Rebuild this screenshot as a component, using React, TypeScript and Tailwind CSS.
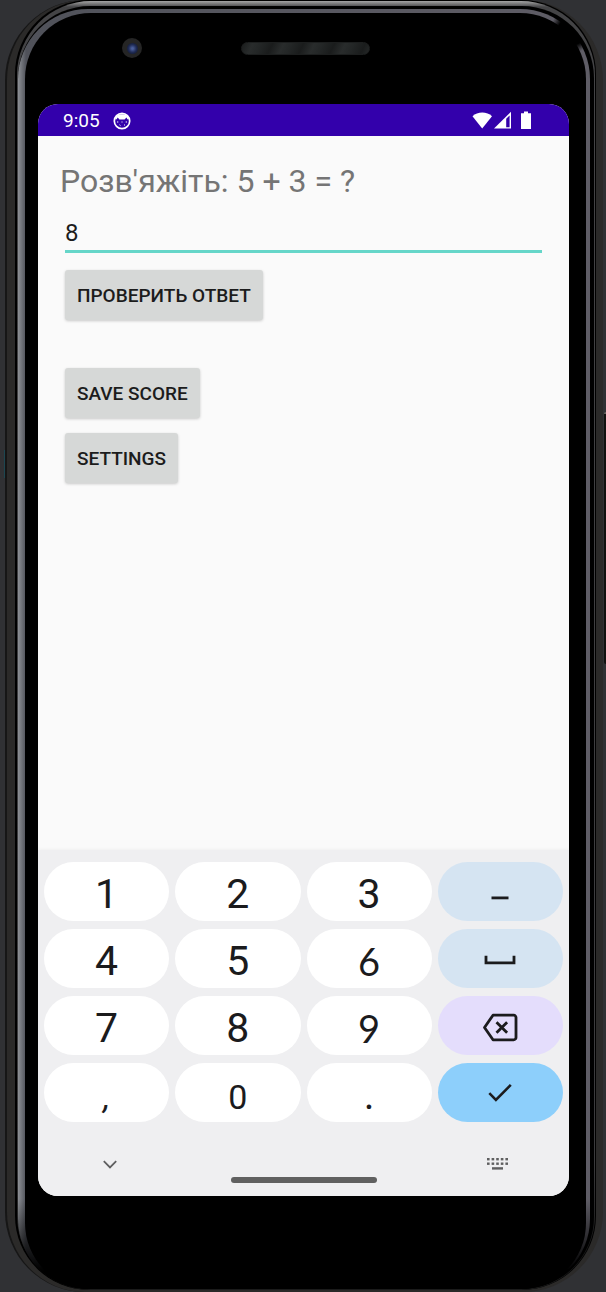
import { useState } from 'react';
import type { ReactNode } from 'react';

function CatFaceIcon() {
  return (
    <svg viewBox="0 0 18 18" className="size-[18px]" aria-hidden="true">
      <circle cx="9" cy="9" r="7.7" fill="none" stroke="#fff" strokeWidth="1.7" />
      <path d="M2 6 C4 1 14 1 16 6 L14.6 7.4 L13.4 5.6 L11.6 7.6 L6.4 7.6 L4.8 5.6 L3.4 7.4 Z" fill="#fff" />
      <path d="M4 10h1.3M12.7 10H14M6.5 12.8l1 .8M11 13.4l1-.8M8.5 10h1" stroke="#fff" strokeWidth="1" />
    </svg>
  );
}

function StatusIcons() {
  return (
    <svg viewBox="0 0 60 20" className="h-5 w-[60px]" role="img" aria-label="Wi-Fi, mobile signal, battery">
      <path d="M0.5 5.2 C5.5 0.4 15 0.4 20 5.2 L10.2 17.5 Z" fill="#fff" />
      <path d="M22 17.5 L39 0.8 V17.5 Z" fill="#fff" />
      <path d="M34.2 7.8 L37.6 4.4 V16.2 H34.2 Z" fill="#3300ab" />
      <path d="M52 0.5h4v1.8h3v15.8H49V2.3h3z" fill="#fff" />
    </svg>
  );
}

function MinusIcon() {
  return (
    <svg viewBox="0 0 18 4" className="mt-3 h-1 w-[18px]" aria-hidden="true">
      <rect x="0.5" y="0.5" width="17" height="2.8" fill="#1b1b1d" />
    </svg>
  );
}

function SpaceIcon() {
  return (
    <svg viewBox="0 0 32 12" className="mt-1 h-3 w-8" fill="none" stroke="#1b1b1d" strokeWidth="2.8" aria-hidden="true">
      <path d="M2 0.8v7h28v-7" />
    </svg>
  );
}

function BackspaceIcon() {
  return (
    <svg viewBox="0 0 36 30" className="mt-1 h-[30px] w-9" fill="none" stroke="#1b1b1d" strokeWidth="2.8" strokeLinejoin="round" aria-hidden="true">
      <path d="M11 2.2H31.7a2.3 2.3 0 0 1 2.3 2.3V24.5a2.3 2.3 0 0 1-2.3 2.3H11L2.5 14.5Z" />
      <path d="M14.5 9.2l10.6 10.6M25.1 9.2L14.5 19.8" />
    </svg>
  );
}

function CheckIcon() {
  return (
    <svg viewBox="0 0 24 20" className="mt-px h-5 w-6" fill="none" stroke="#1b1b1d" strokeWidth="2.6" aria-hidden="true">
      <path d="M1.3 10.2l6.6 6.6L22.8 1.9" />
    </svg>
  );
}

function ChevronIcon() {
  return (
    <svg viewBox="0 0 14 10" className="h-[10px] w-[14px]" fill="none" stroke="#5f5f60" strokeWidth="1.8" aria-hidden="true">
      <path d="M0.8 1.2L7 7.4l6.2-6.2" />
    </svg>
  );
}

function KeyboardIcon() {
  return (
    <svg viewBox="0 0 22 13" className="h-[13px] w-[22px]" fill="#5f5f60" aria-hidden="true">
      {[0, 4.6, 9.2, 13.8, 18.4].map((x) => (
        <g key={x}>
          <rect x={x} y="1" width="2.6" height="2.4" />
          <rect x={x} y="5.5" width="2.6" height="2.4" />
        </g>
      ))}
      <rect x="5" y="10.2" width="11" height="2.4" />
    </svg>
  );
}

type KeySpec = {
  name: string;
  face: ReactNode;
  insert?: string;
  tone?: string;
  icon?: boolean;
};

const keys: KeySpec[] = [
  { name: '1', face: '1', insert: '1' },
  { name: '2', face: '2', insert: '2' },
  { name: '3', face: '3', insert: '3' },
  { name: 'minus', face: <MinusIcon />, insert: '-', tone: 'bg-[#d5e4f2]', icon: true },
  { name: '4', face: '4', insert: '4' },
  { name: '5', face: '5', insert: '5' },
  { name: '6', face: <span className="font-[Lato] text-[38px]">6</span>, insert: '6' },
  { name: 'space', face: <SpaceIcon />, insert: ' ', tone: 'bg-[#d5e4f2]', icon: true },
  { name: '7', face: '7', insert: '7' },
  { name: '8', face: '8', insert: '8' },
  { name: '9', face: <span className="font-[Lato] text-[38px]">9</span>, insert: '9' },
  { name: 'backspace', face: <BackspaceIcon />, tone: 'bg-[#e4ddfc]', icon: true },
  { name: 'comma', face: <span className="text-[34px] italic">,</span>, insert: ',' },
  { name: '0', face: <span className="text-[34px]">0</span>, insert: '0' },
  { name: 'period', face: '.', insert: '.' },
  { name: 'done', face: <CheckIcon />, tone: 'bg-[#8dcffb]', icon: true },
];

function ActionButton({ children }: { children: ReactNode }) {
  return (
    <button
      type="button"
      className="h-[50px] rounded-[3px] bg-[#d6d8d7] px-3 pt-[2px] text-[19px] font-medium text-[#1c1c1c] uppercase shadow-[0_1px_3px_rgba(0,0,0,0.2)]"
    >
      {children}
    </button>
  );
}

function Screen() {
  const [answer, setAnswer] = useState('8');

  const press = (key: KeySpec) => {
    if (key.name === 'backspace') setAnswer(answer.slice(0, -1));
    else if (key.insert) setAnswer(answer + key.insert);
  };

  return (
    <div className="flex flex-1 flex-col overflow-hidden rounded-[20px] bg-[#fafafa]">
      <header className="flex h-8 items-center bg-[#3300ab] pt-[2px] pr-[37px] pl-[25px] text-white">
        <span className="text-[19px] leading-7">9:05</span>
        <span className="ml-[13px]">
          <CatFaceIcon />
        </span>
        <span className="ml-auto">
          <StatusIcons />
        </span>
      </header>

      <main className="flex flex-1 flex-col items-start px-[27px] pt-6">
        <label htmlFor="answer" className="-ml-[5px] text-[32px] leading-[42px] text-[#757575]">
          Розв'яжіть: 5 + 3 = ?
        </label>
        <input
          id="answer"
          value={answer}
          onChange={(event) => setAnswer(event.target.value)}
          className="mt-2 h-[43px] w-full border-b-[3px] border-[#66d6c9] bg-transparent pt-[6px] text-[24px] text-[#1c1c1c] outline-none"
        />
        <div className="mt-[17px] flex flex-col items-start">
          <ActionButton>Проверить ответ</ActionButton>
          <div className="mt-12 flex flex-col items-start gap-[15px]">
            <ActionButton>Save score</ActionButton>
            <ActionButton>Settings</ActionButton>
          </div>
        </div>
      </main>

      <section aria-label="Keyboard" className="bg-[#efeff1] px-[6px] pt-3 shadow-[0_-1px_3px_rgba(0,0,0,0.04)]">
        <div className="grid grid-cols-4 gap-x-[6px] gap-y-2">
          {keys.map((key) => (
            <button
              key={key.name}
              type="button"
              aria-label={key.name}
              onClick={() => press(key)}
              className={`h-[59px] rounded-[30px] text-[41px] leading-[53px] text-[#1b1b1d] ${key.tone ?? 'bg-white'} ${
                key.icon ? 'flex items-center justify-center' : 'pt-[6px]'
              }`}
            >
              {key.face}
            </button>
          ))}
        </div>
        <div className="grid h-[55px] grid-cols-4 items-end pb-[7px]">
          <button type="button" aria-label="Hide keyboard" className="flex justify-center pl-[2px]">
            <ChevronIcon />
          </button>
          <button type="button" aria-label="Switch keyboard" className="col-start-4 flex justify-center">
            <KeyboardIcon />
          </button>
        </div>
        <div className="mx-auto mb-[13px] h-[6px] w-[146px] rounded-full bg-[#606060]" />
      </section>
    </div>
  );
}

export default function App() {
  return (
    <div className="relative flex min-h-screen bg-[#303134] pr-[3px] pl-[5px] font-[Roboto,sans-serif]">
      <div className="absolute top-[412px] right-0 h-[252px] w-[2px] rounded-l-sm border-t-2 border-[#66645f] bg-[#11110f]" />
      <div className="absolute top-[450px] left-[4px] h-7 w-px bg-[#1d4650]" />
      <div className="flex flex-1 rounded-[80px] border-l-2 border-[#161616] bg-[#2b2a29] pr-[7px] pb-[2px] pl-2">
        <div className="flex flex-1 rounded-[74px] bg-black pt-px pr-px pl-[2px]">
          <div className="flex flex-1 rounded-[74px] bg-[linear-gradient(to_bottom,#a5a5a5_0px,#444446_6px,#3b3b3d_90%,#1b1b1b_96%)] pt-[5px] pr-px pb-px pl-px">
            <div className="flex flex-1 rounded-[72px] bg-black pt-[3px] pr-1">
              <div className="flex flex-1 rounded-[70px] bg-[radial-gradient(circle_at_calc(100%_-_18px)_22px,#000_14px,transparent_22px),linear-gradient(to_top,#000_18px,transparent_90px),linear-gradient(to_right,#8d9095,#50525a_8px,#5f5d66)] pt-1 pr-1 pl-[7px]">
                <div className="flex flex-1 flex-col rounded-[66px] bg-black pr-[17px] pb-[93px] pl-[13px]">
                  <div className="mb-[21px] -mr-1 grid h-[70px] grid-cols-[1fr_auto_1fr] items-center">
                    <div className="ml-[84px] flex size-5 items-center justify-center rounded-full bg-[#252525]">
                      <div className="size-[11px] rounded-full bg-radial from-[#4b5f9c] from-10% via-[#1f2b55] via-50% to-[#0c1020]" />
                    </div>
                    <div className="h-[13px] w-[129px] rounded-full border border-[#1c1e1e] bg-[repeating-linear-gradient(115deg,#1a1c1c_0px,#292c2c_10px,#232626_18px,#1a1c1c_28px)]" />
                  </div>
                  <Screen />
                </div>
              </div>
            </div>
          </div>
        </div>
      </div>
    </div>
  );
}
